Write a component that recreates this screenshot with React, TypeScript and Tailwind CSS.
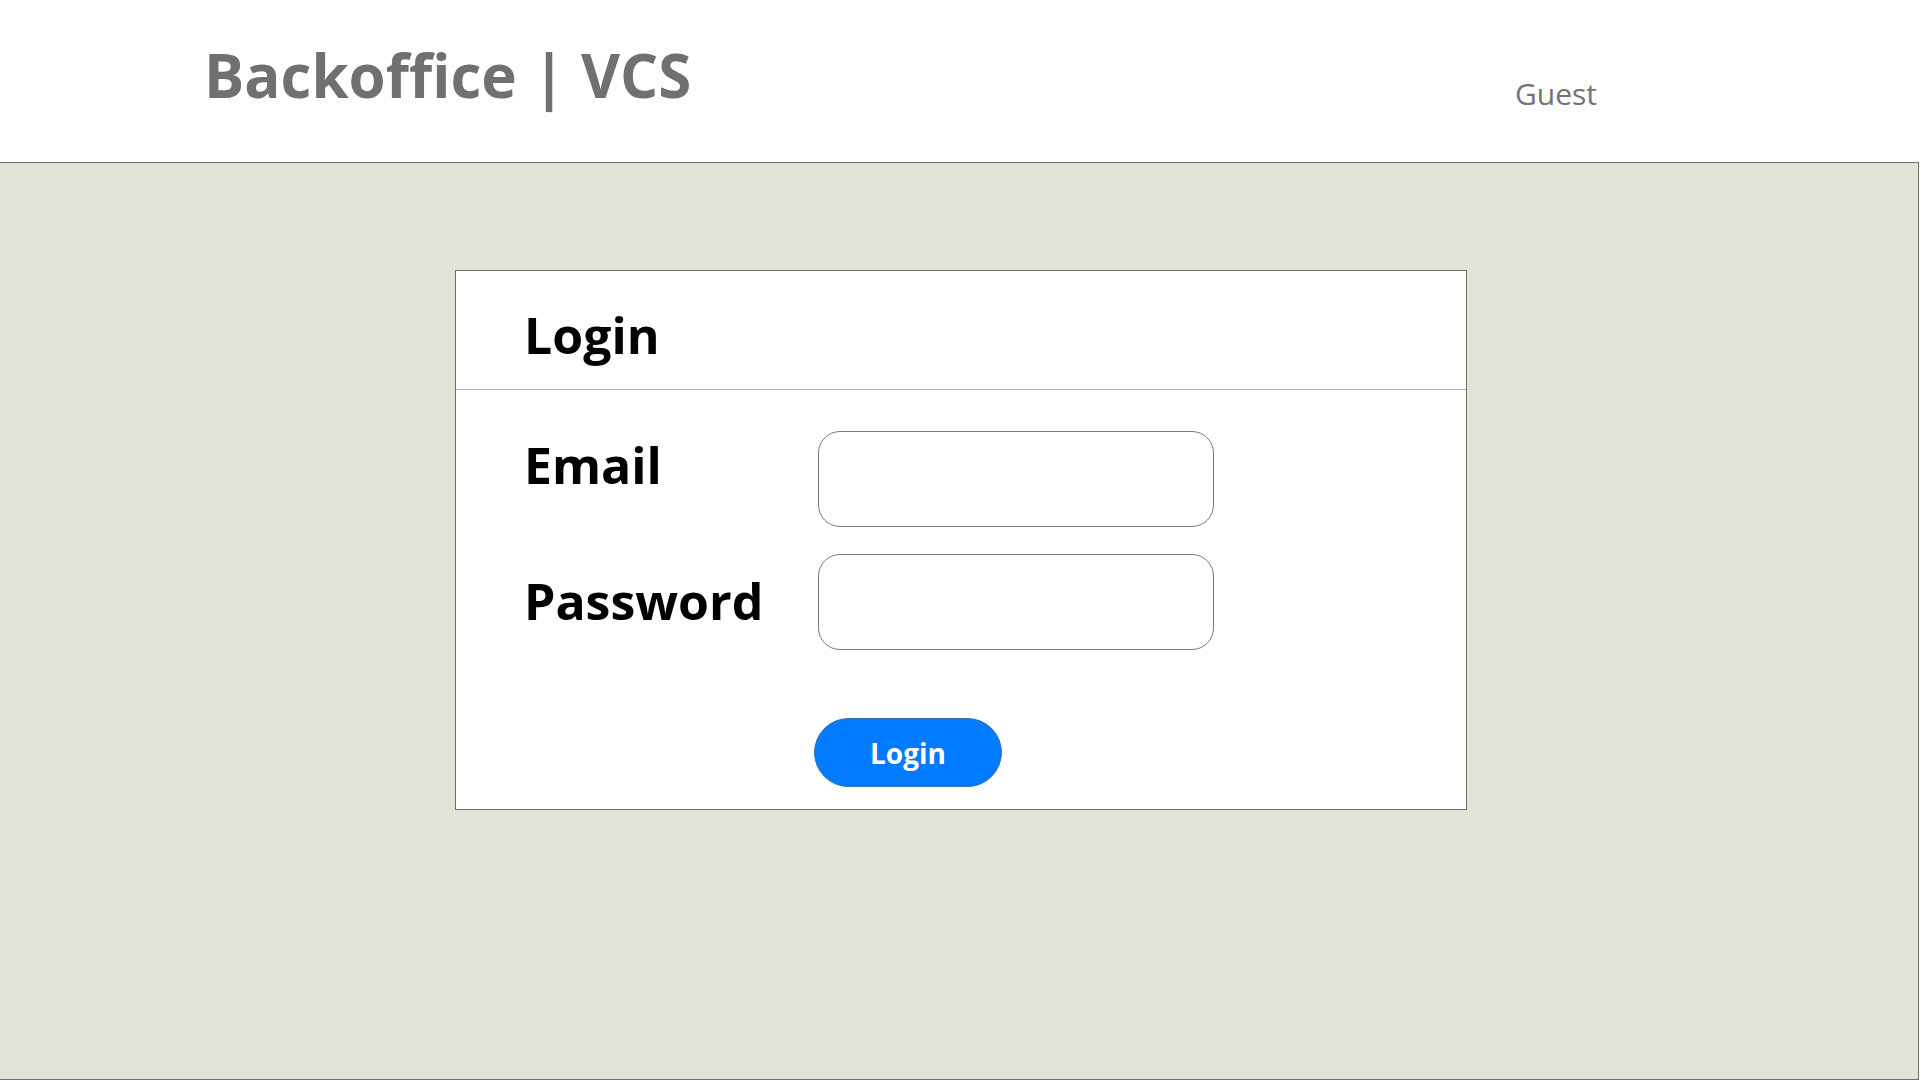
import React from 'react';

const fieldClass =
  'w-[396px] h-[96px] rounded-[22px] border border-[#7a7a7a] bg-white px-5 text-[24px] outline-none';

const App: React.FC = () => {
  return (
    <div className="w-[1920px] h-[1080px] bg-white font-['Open_Sans',sans-serif] overflow-hidden">
      <header className="h-[162px] flex items-start justify-between">
        <h1 className="ml-[204px] mt-[35px] text-[60px] leading-[1.362] font-bold text-[#707070]">
          Backoffice | VCS
        </h1>
        <span className="mr-[323px] mt-[74px] text-[30px] leading-[1.362] text-[#737373]">Guest</span>
      </header>

      <main className="w-[1919px] h-[918px] bg-[#e3e4d7] border-t border-r border-b border-[#707070] pt-[107px]">
        <div className="ml-[455px] w-[1012px] h-[540px] bg-white border border-[#707070] flex flex-col">
          <div className="h-[119px] border-b border-[#b3b3b3] pl-[68px] pt-[30px]">
            <h2 className="text-[50px] leading-[1.362] font-bold text-black">Login</h2>
          </div>

          <form className="flex flex-col pl-[68px] pt-[41px]" onSubmit={(e) => e.preventDefault()}>
            <div className="flex items-start">
              <label className="w-[294px] text-[50px] leading-[1.362] font-bold text-black">Email</label>
              <input type="email" className={fieldClass} />
            </div>
            <div className="flex items-start mt-[27px]">
              <label className="w-[294px] mt-[13px] text-[50px] leading-[1.362] font-bold text-black">Password</label>
              <input type="password" className={fieldClass} />
            </div>
            <button
              type="submit"
              className="ml-[290px] mt-[68px] w-[188px] h-[69px] rounded-full bg-[#007bff] border border-[#3a6fae] text-white text-[28px] font-bold leading-none"
            >
              Login
            </button>
          </form>
        </div>
      </main>
    </div>
  );
};

export default App;
